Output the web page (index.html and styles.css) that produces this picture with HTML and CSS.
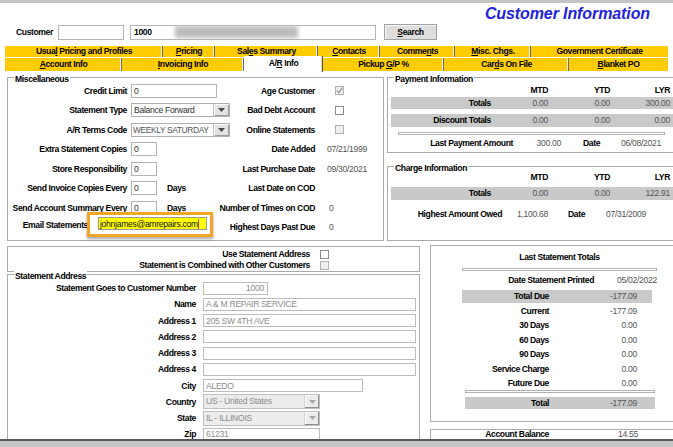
FILE: index.html
```html
<!DOCTYPE html>
<html lang="en">
<head>
<meta charset="utf-8">
<title>Customer Information</title>
<link rel="stylesheet" href="styles.css">
</head>
<body>
<div class="app">
  <div class="topbar"></div>
  <header class="header">
    <div class="title-row"><h1 class="title">Customer Information</h1></div>
    <div class="cust-row">
      <span class="cust-label">Customer</span>
      <span class="field cust-a"></span>
      <span class="field cust-b"><span class="cust-num">1000</span><span class="blur"></span></span>
      <button class="btn" type="button"><u>S</u>earch</button>
    </div>
  </header>

  <nav class="tabs">
    <div class="tabrow row1">
      <div class="tab">Usua<u>l</u> Pricing and Profiles</div>
      <div class="tab"><u>P</u>ricing</div>
      <div class="tab">Sal<u>e</u>s Summary</div>
      <div class="tab"><u>C</u>ontacts</div>
      <div class="tab">Comme<u>n</u>ts</div>
      <div class="tab"><u>M</u>isc. Chgs.</div>
      <div class="tab">Government Certificate</div>
    </div>
    <div class="tabrow row2">
      <div class="tab"><u>A</u>ccount Info</div>
      <div class="tab"><u>I</u>nvoicing Info</div>
      <div class="tab active">A/<u>R</u> Info</div>
      <div class="tab">Pickup <u>G</u>/P %</div>
      <div class="tab">Car<u>d</u>s On File</div>
      <div class="tab"><u>B</u>lanket PO</div>
    </div>
  </nav>

  <main class="main">
    <div class="upper">
      <section class="group misc">
        <h2 class="group-title">Miscellaneous</h2>
        <div class="misc-grid">
          <span class="lbl">Credit Limit</span>
          <span class="ctl"><span class="field w86">0</span></span>
          <span class="lbl">Age Customer</span>
          <span class="chkcell"><span class="chk dis"><svg width="7" height="7" viewBox="0 0 7 7"><path d="M0.8 3.4 L2.8 5.6 L6.3 0.9" fill="none" stroke="#8c8c8c" stroke-width="1.1"/></svg></span></span>

          <span class="lbl">Statement Type</span>
          <span class="ctl"><span class="select"><span class="sel-text">Balance Forward</span><span class="sel-btn"><svg width="7" height="4" viewBox="0 0 7 4"><path d="M0 0H7L3.5 4Z" fill="#4a4a4a"/></svg></span></span></span>
          <span class="lbl">Bad Debt Account</span>
          <span class="chkcell"><span class="chk"></span></span>

          <span class="lbl">A/R Terms Code</span>
          <span class="ctl"><span class="select"><span class="sel-text soft">WEEKLY SATURDAY</span><span class="sel-btn"><svg width="7" height="4" viewBox="0 0 7 4"><path d="M0 0H7L3.5 4Z" fill="#4a4a4a"/></svg></span></span></span>
          <span class="lbl">Online Statements</span>
          <span class="chkcell"><span class="chk dis"></span></span>

          <span class="lbl">Extra Statement Copies</span>
          <span class="ctl"><span class="field w26">0</span></span>
          <span class="lbl">Date Added</span>
          <span class="val">07/21/1999</span>

          <span class="lbl">Store Responsibility</span>
          <span class="ctl"><span class="field w26">0</span></span>
          <span class="lbl">Last Purchase Date</span>
          <span class="val">09/30/2021</span>

          <span class="lbl">Send Invoice Copies Every</span>
          <span class="ctl"><span class="field w26">0</span><span class="days">Days</span></span>
          <span class="lbl">Last Date on COD</span>
          <span class="val"></span>

          <span class="lbl">Send Account Summary Every</span>
          <span class="ctl"><span class="field w26">0</span><span class="days">Days</span></span>
          <span class="lbl">Number of Times on COD</span>
          <span class="val v0">0</span>

          <span class="email-row">
            <span class="email-label">Email Statements</span>
            <span class="highlight"><span class="field email">johnjames@amrepairs.com<span class="caret"></span></span></span>
          </span>
          <span class="lbl">Highest Days Past Due</span>
          <span class="val v0">0</span>
        </div>
      </section>

      <div class="right-col">
        <section class="group pay">
          <h2 class="group-title">Payment Information</h2>
          <div class="prow head"><span></span><span>MTD</span><span>YTD</span><span>LYR</span></div>
          <div class="prow band first"><span class="plbl">Totals</span><span>0.00</span><span>0.00</span><span>300.00</span></div>
          <div class="prow band second"><span class="plbl">Discount Totals</span><span>0.00</span><span>0.00</span><span>0.00</span></div>
          <div class="etched pay-sep"></div>
          <div class="lastpay"><span class="plbl">Last Payment Amount</span><span class="num">300.00</span><span class="plbl dlbl">Date</span><span class="num-l">06/08/2021</span></div>
        </section>

        <section class="group charge">
          <h2 class="group-title">Charge Information</h2>
          <div class="prow head chead"><span></span><span>MTD</span><span>YTD</span><span>LYR</span></div>
          <div class="prow band cband"><span class="plbl">Totals</span><span>0.00</span><span>0.00</span><span>122.91</span></div>
          <div class="highest"><span class="plbl">Highest Amount Owed</span><span class="num-l">1,100.68</span><span class="plbl dlbl2">Date</span><span class="num-l">07/31/2009</span></div>
        </section>
      </div>
    </div>

    <div class="lower">
      <div class="left-col">
        <div class="opts">
          <div class="opt-row"><span class="lbl">Use Statement Address</span><span class="chk"></span></div>
          <div class="opt-row"><span class="lbl">Statement is Combined with Other Customers</span><span class="chk dis"></span></div>
        </div>
        <section class="group addr">
          <h2 class="group-title">Statement Address</h2>
          <div class="addr-grid">
            <span class="lbl">Statement Goes to Customer Number</span>
            <span class="ctl2"><span class="field dim w65 right">1000</span></span>
            <span class="lbl">Name</span>
            <span class="ctl2"><span class="field dim w213">A &amp; M REPAIR SERVICE</span></span>
            <span class="lbl">Address 1</span>
            <span class="ctl2"><span class="field dim w213">205 SW 4TH AVE</span></span>
            <span class="lbl">Address 2</span>
            <span class="ctl2"><span class="field dim w213"></span></span>
            <span class="lbl">Address 3</span>
            <span class="ctl2"><span class="field dim w213"></span></span>
            <span class="lbl">Address 4</span>
            <span class="ctl2"><span class="field dim w213"></span></span>
            <span class="lbl">City</span>
            <span class="ctl2"><span class="field dim w160">ALEDO</span></span>
            <span class="lbl">Country</span>
            <span class="ctl2"><span class="select dsel"><span class="sel-text">US - United States</span><span class="sel-btn"><svg width="7" height="4" viewBox="0 0 7 4"><path d="M0 0H7L3.5 4Z" fill="#a8a8a8"/></svg></span></span></span>
            <span class="lbl">State</span>
            <span class="ctl2"><span class="select dsel"><span class="sel-text">IL - ILLINOIS</span><span class="sel-btn"><svg width="7" height="4" viewBox="0 0 7 4"><path d="M0 0H7L3.5 4Z" fill="#a8a8a8"/></svg></span></span></span>
            <span class="lbl">Zip</span>
            <span class="ctl2"><span class="field dim w117">61231</span></span>
          </div>
        </section>
      </div>

      <div class="stmt-col">
        <section class="box stmt">
          <div class="stmt-inner">
            <div class="stmt-title">Last Statement Totals</div>
            <div class="etched s-sep1"></div>
            <div class="printed"><span class="plbl">Date Statement Printed</span><span class="num">05/02/2022</span></div>
            <div class="srow sband first-band"><span class="plbl">Total Due</span><span class="num">-177.09</span></div>
            <div class="srow"><span class="plbl">Current</span><span class="num">-177.09</span></div>
            <div class="srow"><span class="plbl">30 Days</span><span class="num">0.00</span></div>
            <div class="srow"><span class="plbl">60 Days</span><span class="num">0.00</span></div>
            <div class="srow"><span class="plbl">90 Days</span><span class="num">0.00</span></div>
            <div class="srow"><span class="plbl">Service Charge</span><span class="num">0.00</span></div>
            <div class="srow"><span class="plbl">Future Due</span><span class="num">0.00</span></div>
            <div class="etched s-sep2"></div>
            <div class="srow sband total-band"><span class="plbl">Total</span><span class="num">-177.09</span></div>
          </div>
        </section>
        <section class="box balance">
          <div class="srow bal-row"><span class="plbl">Account Balance</span><span class="num">14.55</span></div>
        </section>
      </div>
    </div>
  </main>

  <div class="footer"></div>
</div>
</body>
</html>
```

FILE: styles.css
```css
* { box-sizing: border-box; margin: 0; padding: 0; }
html, body { width: 673px; height: 447px; overflow: hidden; background: #fff; }
body {
  font-family: "Liberation Sans", Arial, sans-serif;
  font-size: 8.6px;
  letter-spacing: -0.3px;
  line-height: 12px;
  color: #000;
}
b, .lbl, .plbl, .tab, .days, .email-label, .cust-label, .cust-num, .stmt-title, .group-title, .btn, .prow.head { letter-spacing: -0.4px; }
.app { display: flex; flex-direction: column; height: 447px; }
.topbar { flex: none; height: 3px; background: #c4c4c4; }

/* header */
.header { flex: none; height: 37px; }
.title-row { height: 21px; display: flex; justify-content: flex-end; padding: 2px 23px 0 0; }
.title {
  font-family: "Liberation Sans", Arial, sans-serif;
  font-size: 16px; line-height: 18px; font-weight: bold; font-style: italic;
  letter-spacing: -0.1px;
  color: #2323e0;
}
.cust-row { height: 16px; display: flex; align-items: center; padding-left: 16px; }
.cust-label { width: 42px; font-weight: bold; }
.field {
  display: inline-flex; align-items: center; flex: none;
  height: 14px; border: 1px solid #b4b4b4; background: #fff;
  padding-left: 2px; color: #333; white-space: nowrap; overflow: hidden;
}
.cust-a { width: 66px; height: 15px; }
.cust-b { width: 246px; height: 15px; margin-left: 6px; padding-left: 3px; }
.cust-num { width: 41px; font-weight: bold; color: #000; }
.blur { width: 123px; height: 12px; background: #bcbcbc; filter: blur(2px); }
.btn {
  width: 53px; height: 16px; margin-left: 8px;
  font-family: "Liberation Sans", Arial, sans-serif;
  font-size: 8.6px; line-height: 12px; font-weight: bold;
  color: #000; background: #dedede; border: 1px solid #a2a2a2;
  box-shadow: inset 1px 1px #f6f6f6;
}

/* tabs */
.tabs { flex: none; margin: 6px 5px 0; }
.tabrow { display: grid; }
.row1 { grid-template-columns: 158px 52px 103px 62px 75px 76px 137px; height: 11px; }
.row2 { grid-template-columns: 117px 122px 79px 121px 125px 99px; height: 13px; margin-top: 1px; }
.tab {
  background: #ffcc00; font-weight: bold; text-align: center; white-space: nowrap;
  box-shadow: inset -1px 0 #6a6a6a, inset -2px 0 #eeeeee;
}
.row1 .tab { line-height: 11px; }
.row2 .tab { line-height: 13px; }
.tab:last-child { box-shadow: none; }
.tab.active {
  background: #fff; margin-top: -2px; line-height: 15px;
  box-shadow: inset -1px 0 #555, inset -2px 0 #d8d8d8;
  margin-bottom: -1px;
}

/* main */
.main { flex: 1; min-height: 0; overflow: hidden; padding-left: 7px; }
.upper { display: grid; grid-template-columns: 377px 288px; column-gap: 3px; margin-top: 6px; align-items: start; }

.group { position: relative; border: 1px solid #ababab; }
.group-title {
  position: absolute; top: -4px; left: 6px;
  font-size: 8.6px; line-height: 10px; font-weight: bold;
  background: #fff; padding: 0 1px;
}
.box { border: 1px solid #ababab; }

.lbl { font-weight: bold; white-space: nowrap; }
.val { color: #555; padding-left: 12px; white-space: nowrap; align-self: center; }
.val.v0 { padding-left: 14px; }

/* miscellaneous */
.misc { height: 164px; padding-top: 3px; }
.misc-grid {
  display: grid;
  grid-template-columns: 119px 92px 96px 1fr;
  grid-template-rows: repeat(8, 19.5px);
}
.misc-grid > .lbl { justify-self: end; align-self: center; }
.ctl { display: flex; align-items: center; padding-left: 4px; }
.days { margin-left: 10px; font-weight: bold; }
.w86 { width: 86px; }
.w26 { width: 26px; }
.chkcell { display: flex; align-items: center; padding-left: 20px; }
.chk {
  display: inline-flex; align-items: center; justify-content: center;
  width: 9px; height: 9px; border: 1px solid #8a8a8a; background: #fff; flex: none;
}
.chk.dis { border-color: #b2b2b2; background: #efefef; }

.select {
  display: inline-flex; flex: none; width: 99px; height: 14px;
  border: 1px solid #b0b0b0; background: #fff; overflow: hidden;
}
.sel-text { flex: 1; min-width: 0; padding-left: 2px; line-height: 12px; color: #303030; white-space: nowrap; overflow: hidden; }
.sel-text.soft { color: #555; padding-left: 1px; font-size: 8.4px; letter-spacing: -0.35px; }
.sel-btn {
  flex: none; width: 16px; display: flex; align-items: center; justify-content: center;
  background: #e3e3e3; border-left: 1px solid #c4c4c4;
  box-shadow: inset 1px 1px #fafafa, inset -1px -1px #9a9a9a;
}

.email-row {
  grid-column: 1 / 3; align-self: start; margin-top: -5.5px;
  display: flex; align-items: center;
}
.email-label { width: 80px; text-align: right; font-weight: bold; white-space: nowrap; }
.highlight {
  margin-left: -1px;
  border: 3px solid #f3a526;
  padding: 2px 3px 4px 8px;
  box-shadow: 0 2px 3px rgba(0,0,0,0.35);
}
.field.email { width: 109px; height: 13px; background: #ffff00; color: #111; border-color: #9a9a9a; padding-left: 1px; }
.caret { display: inline-block; width: 1px; height: 10px; background: #d2461e; margin-left: 0; }

/* payment / charge */
.right-col { display: flex; flex-direction: column; }
.pay { height: 76px; }
.charge { height: 75px; margin-top: 13px; }
.prow {
  display: grid; grid-template-columns: 100px 57px 62px 60px;
  margin-left: 3px; color: #555;
}
.prow > span { text-align: right; white-space: nowrap; }
.prow.head { color: #000; font-weight: bold; height: 12px; margin-top: 6px; }
.prow.band { background: #c9c9c9; }
.prow.first { height: 12px; margin-top: 1px; }
.prow.second { height: 13px; margin-top: 5px; line-height: 13px; }
.plbl { font-weight: bold; color: #000; white-space: nowrap; }
.prow .plbl { text-align: right; }
.etched { height: 3px; border: 1px solid #b2b2b2; background: #fff; }
.pay-sep { margin: 5px 0 0 10px; width: 267px; }
.lastpay {
  display: grid; grid-template-columns: 125px 48px 60px auto;
  margin-top: 2px; height: 12px; color: #555;
}
.lastpay .plbl:first-child { text-align: right; }
.num { text-align: right; white-space: nowrap; }
.num-l { white-space: nowrap; }
.dlbl { padding-left: 22px; }

.prow.chead { margin-top: 4px; }
.prow.cband { height: 13px; margin-top: 4px; line-height: 13px; }
.highest {
  display: grid; grid-template-columns: 114px 66px 38px auto;
  margin-top: 8px; height: 12px; color: #555;
}
.highest .plbl:first-child { text-align: right; }
.highest .num-l:nth-child(2) { padding-left: 15px; }
.dlbl2 { padding-left: 0; }

/* lower */
.lower { display: grid; grid-template-columns: 413px 245px; column-gap: 10px; margin-top: 4px; align-items: start; }
.left-col { display: flex; flex-direction: column; }
.opts { margin-top: 1px; height: 26px; border: 1px solid #ababab; padding-top: 1px; }
.opt-row { display: grid; grid-template-columns: 302px auto; height: 11px; align-items: center; }
.opt-row .lbl { text-align: right; }
.opt-row .chk { margin-left: 10px; }

.addr { margin-top: 2px; height: 200px; padding-top: 5px; }
.addr-grid { display: grid; grid-template-columns: 188px auto; grid-auto-rows: 16.25px; }
.addr-grid > .lbl { justify-self: end; align-self: center; }
.ctl2 { display: flex; align-items: center; padding-left: 7px; }
.field.dim { height: 13px; color: #8c8c8c; border-color: #bcbcbc; }
.field.right { justify-content: flex-end; padding-right: 3px; }
.w65 { width: 65px; }
.w213 { width: 213px; }
.w160 { width: 160px; }
.w117 { width: 117px; }
.dsel { width: 117px; height: 15px; background: #ececec; border-color: #c0c0c0; }
.dsel .sel-text { color: #8c8c8c; line-height: 13px; }
.dsel .sel-btn { width: 15px; background: #ececec; border-left: 1px solid #d4d4d4; box-shadow: inset -1px -1px #8e8e8e, inset 1px 1px #fafafa; }

/* last statement */
.stmt-col { display: flex; flex-direction: column; }
.stmt { height: 177px; padding: 5px 0 0 31px; }
.stmt-inner { width: 195px; }
.stmt-title { text-align: center; font-weight: bold; height: 12px; }
.s-sep1 { margin-top: 5px; }
.printed { display: grid; grid-template-columns: 132px 63px; margin-top: 3px; height: 12px; color: #555; }
.printed .plbl { text-align: right; }
.srow { display: grid; grid-template-columns: 87px 88px; height: 14.4px; line-height: 14.4px; color: #555; }
.srow .plbl { text-align: right; }
.sband { background: #c9c9c9; }
.first-band { width: 190px; height: 13px; line-height: 13px; margin-top: 4px; margin-bottom: 1px; }
.s-sep2 { margin: 0 0 0 3px; width: 190px; }
.total-band { width: 190px; margin-left: 3px; grid-template-columns: 84px 88px; height: 12px; line-height: 12px; margin-top: 4px; }
.balance { margin-top: 7px; height: 30px; padding: 0 0 0 32px; }
.bal-row { grid-template-columns: 86px 89px; height: 9px; line-height: 9px; margin-top: 0; }

.footer { flex: none; height: 8px; background: #c6c6c6; border-top: 2px solid #595959; }
```
